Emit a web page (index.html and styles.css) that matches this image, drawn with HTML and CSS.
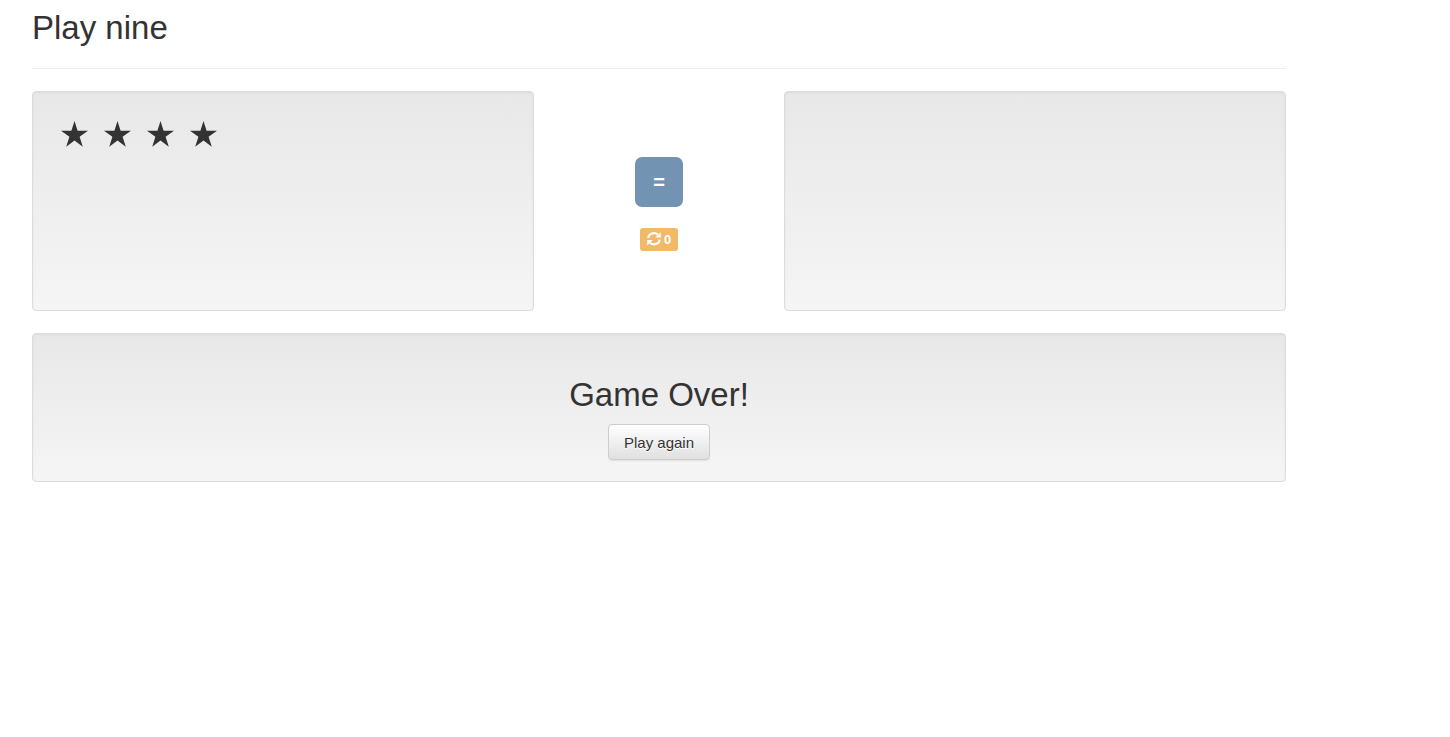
FILE: index.html
```html
<!DOCTYPE html>
<html lang="en">
<head>
<meta charset="utf-8">
<title>Play nine</title>
<link rel="stylesheet" href="styles.css">
</head>
<body>
<svg class="defs" aria-hidden="true">
  <symbol id="star" viewBox="0 0 27 26"><path d="M13.5 0L16.6 9.7H27L18.6 15.8L21.8 25.7L13.5 19.6L5.2 25.7L8.4 15.8L0 9.7H10.4Z"/></symbol>
</svg>
<main class="game">
  <h2 class="title">Play nine</h2>
  <hr class="rule">
  <div class="board">
    <section class="well stars" aria-label="4 stars">
      <svg class="star"><use href="#star"/></svg>
      <svg class="star"><use href="#star"/></svg>
      <svg class="star"><use href="#star"/></svg>
      <svg class="star"><use href="#star"/></svg>
    </section>
    <div class="controls">
      <button class="check" type="button" disabled>=</button>
      <button class="redraw" type="button" disabled>
        <svg class="refresh" viewBox="0 0 14 14" aria-hidden="true">
          <path d="M1.3 6A5.7 5.3 0 0 1 10.9 2.7M12.7 7.6A5.7 5.3 0 0 1 3.1 10.9" fill="none" stroke="currentColor" stroke-width="2.2"/>
          <path d="M13.8 .2V5.6H8.2ZM.2 13.4V8H5.8Z" fill="currentColor"/>
        </svg>
        <span>0</span>
      </button>
    </div>
    <section class="well" aria-label="Answer"></section>
  </div>
  <section class="well result">
    <h2 class="title">Game Over!</h2>
    <button class="again" type="button">Play again</button>
  </section>
</main>
</body>
</html>
```
FILE: styles.css
```css
* {
  box-sizing: border-box;
}

body {
  margin: 0;
  background: #fff;
  color: #333;
  font-family: "Liberation Sans", Arial, sans-serif;
}

button {
  font-family: inherit;
}

.defs {
  display: none;
}

.game {
  max-width: 1254px;
  margin: 0 32px;
  padding-top: 10px;
}

.title {
  margin: 0;
  font-size: 33px;
  font-weight: 400;
  line-height: 36px;
}

.rule {
  margin: 22px 0;
  border: 0;
  border-top: 1px solid #eee;
}

.board {
  display: grid;
  grid-template-columns: 2fr 1fr 2fr;
  min-height: 220px;
  margin-bottom: 22px;
}

.well {
  border: 1px solid #dcdcdc;
  border-radius: 4px;
  background: linear-gradient(#e8e8e8, #f5f5f5);
  box-shadow: inset 0 1px 3px rgba(0, 0, 0, .05), 0 1px 0 rgba(255, 255, 255, .1);
}

.stars {
  display: flex;
  flex-wrap: wrap;
  align-content: flex-start;
  gap: 16px;
  padding: 29px 28px;
}

.star {
  width: 27px;
  height: 26px;
  fill: #333;
}

.controls {
  display: flex;
  flex-direction: column;
  align-items: center;
  justify-content: center;
  gap: 21px;
  padding-top: 6px;
}

.check {
  width: 48px;
  height: 50px;
  padding: 0;
  border: 0;
  border-radius: 7px;
  background: #7393b3;
  color: #fff;
  font-size: 20px;
  font-weight: 700;
}

.redraw {
  display: flex;
  align-items: center;
  justify-content: center;
  gap: 3px;
  height: 23px;
  padding: 0 7px 1px;
  border: 0;
  border-radius: 3px;
  background: #f2b968;
  color: #fff;
  font-size: 13px;
  font-weight: 700;
}

.refresh {
  width: 14px;
  height: 14px;
}

.result {
  padding: 43px 20px 21px;
  text-align: center;
}

.again {
  display: block;
  height: 36px;
  margin: 11px auto 0;
  padding: 0 15px;
  border: 1px solid #ccc;
  border-radius: 4px;
  background: linear-gradient(#fff, #e0e0e0);
  box-shadow: inset 0 1px 0 rgba(255, 255, 255, .15), 0 1px 1px rgba(0, 0, 0, .075);
  color: #333;
  font-size: 15px;
  text-shadow: 0 1px 0 #fff;
}
```
